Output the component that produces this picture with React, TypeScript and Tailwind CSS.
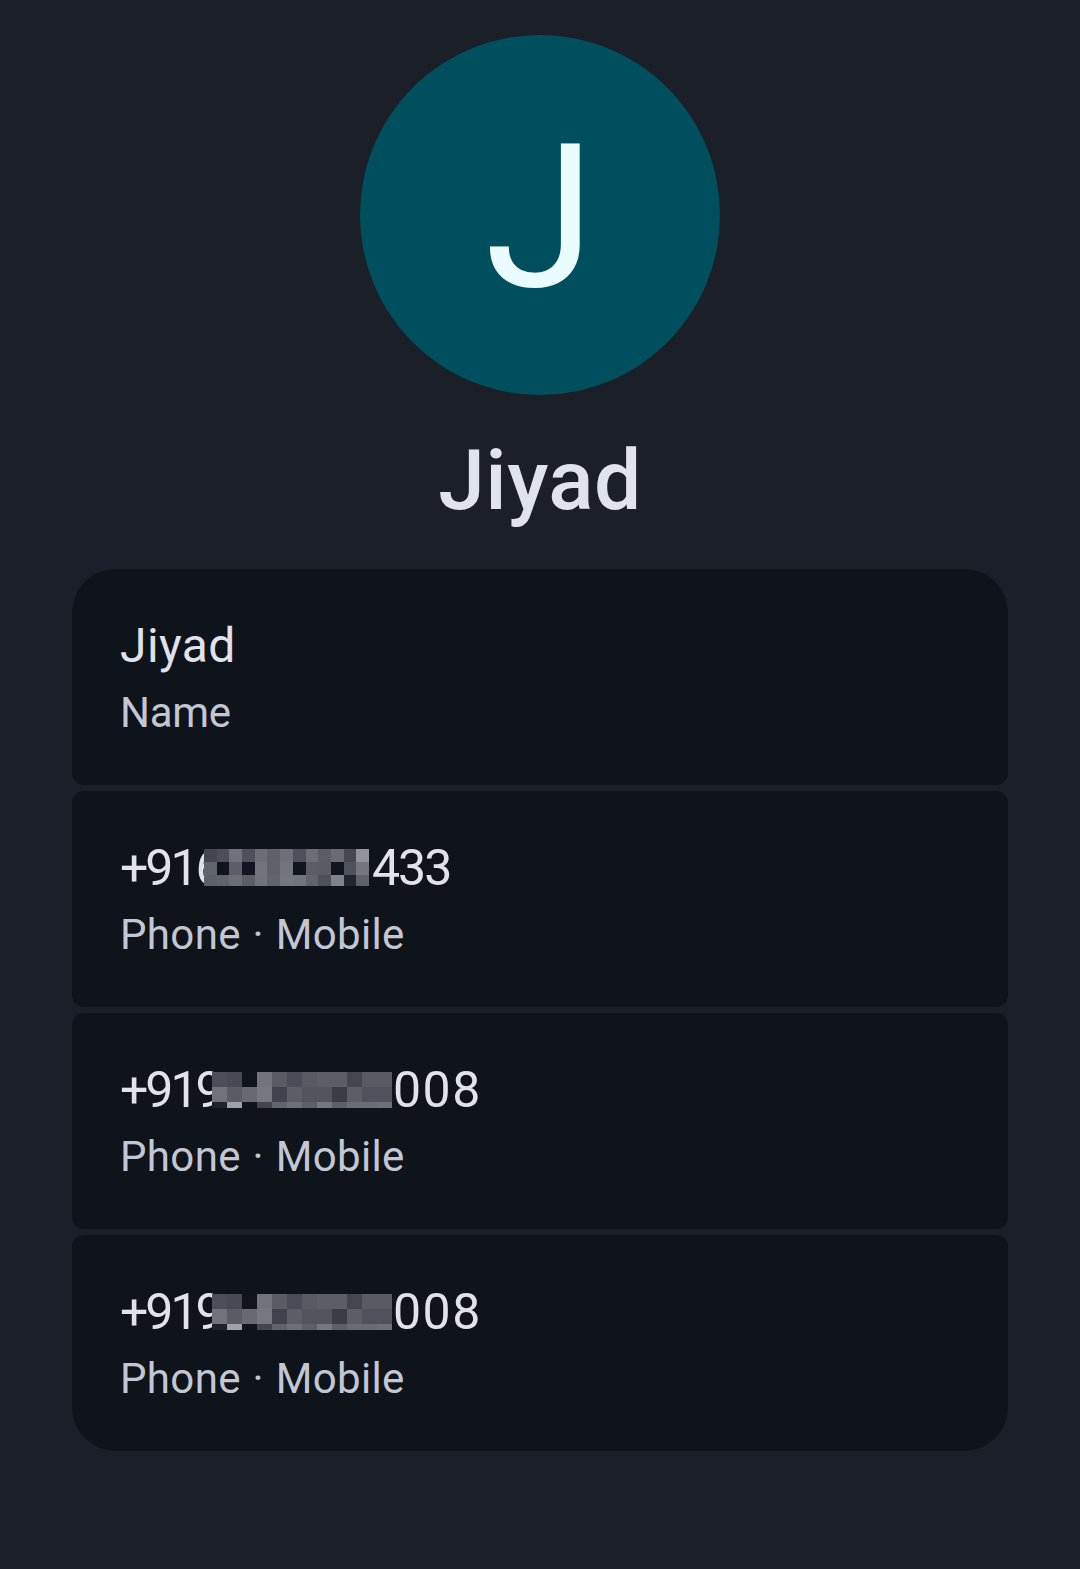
const font = "font-['Roboto','Inter',sans-serif]";

const blurA = {
  rows: [13, 13, 11],
  cols: 13,
  colors: [
    "#43464f","#4c4f58","#70727b","#4f515a","#6c6e76","#5f6169","#6e7079","#4e5059","#6c6e77","#5b5d65","#6a6c74","#464851","#92949c",
    "#62646c","#10141c","#5c5e67","#11151d","#72747c","#60626a","#73757d","#11151d","#5c5e66","#5a5c64","#10141c","#50525b","#74767e",
    "#5f6169","#62646c","#6c6e76","#5c5e66","#71737b","#62646c","#75777f","#73757d","#62646c","#4f5159","#81838b","#22252d","#5f6169",
  ],
};

const blurB = {
  rows: [15, 15, 6],
  cols: 12,
  colors: [
    "#4c4f57","#474a52","#10141b","#72747c","#5a5c64","#4b4d56","#585a62","#5c5e66","#5c5e66","#43464e","#595b63","#595b63",
    "#71737b","#5a5c64","#686a72","#767880","#40434c","#5c5e66","#53555d","#53555d","#3a3d46","#5c5e66","#50525b","#50525b",
    "#1e2229","#a0a2aa","#10141b","#43464e","#62646c","#6e7078","#5e6068","#767880","#5e6068","#6a6c74","#6a6c74","#6e7078",
  ],
};

function Blur({ data, className }: { data: { rows: number[]; cols: number; colors: string[] }; className: string }) {
  return (
    <div className={`absolute grid ${className}`} style={{ gridTemplateColumns: `repeat(${data.cols}, 1fr)`, gridTemplateRows: data.rows.map((r) => `${r}px`).join(" ") }}>
      {data.colors.map((c, i) => (
        <div key={i} style={{ backgroundColor: c }} />
      ))}
    </div>
  );
}

function Row({ title, sub, subClass, radius, blur }: { title: React.ReactNode; sub: string; subClass: string; radius: string; blur?: React.ReactNode }) {
  return (
    <div className={`relative h-[216px] bg-[#0f131a] pl-[48px] pt-[45px] ${radius}`}>
      <div className="text-[48px] leading-[64px] text-[#e0e2ec]">{title}</div>
      <div className={`text-[42px] leading-[56px] mt-[7px] text-[#c3c6d3] ${subClass}`}>{sub}</div>
      {blur}
    </div>
  );
}

function Phone({ head, tail, width, spacing }: { head: string; tail: string; width: string; spacing: string }) {
  return (
    <div className="whitespace-nowrap text-[50px]">
      <span className={`inline-block tracking-[-3px] ${width}`}>{head}</span>
      <span className={spacing}>{tail}</span>
    </div>
  );
}

const phoneSub = "tracking-[0.35px] [word-spacing:1px]";

export default function App() {
  return (
    <div className={`w-[1080px] h-[1569px] bg-[#1b1f27] flex flex-col items-center pt-[35px] ${font}`}>
      <div className="w-[360px] h-[360px] rounded-full bg-[#004f5f] flex items-center justify-center pt-[6px] text-[#ebfcff] text-[200px] leading-none">J</div>
      <div className="mt-[36px] h-[100px] text-[84px] leading-[100px] font-medium tracking-[0.5px] text-[#e0e2ec]">Jiyad</div>
      <div className="mt-[38px] w-[936px] flex flex-col gap-[6px]">
        <Row title={<span className="tracking-[0.4px]">Jiyad</span>} sub="Name" subClass="tracking-[-0.3px]" radius="rounded-t-[44px] rounded-b-[12px]" />
        <Row title={<Phone head="+916" tail="433" width="w-[252px]" spacing="tracking-[-2px]" />} sub="Phone · Mobile" subClass={phoneSub} radius="rounded-[12px]" blur={<Blur data={blurA} className="left-[132px] top-[58px] w-[165px]" />} />
        <Row title={<Phone head="+919" tail="008" width="w-[273px]" spacing="tracking-[1.5px]" />} sub="Phone · Mobile" subClass={phoneSub} radius="rounded-[12px]" blur={<Blur data={blurB} className="left-[140px] top-[59px] w-[180px]" />} />
        <Row title={<Phone head="+919" tail="008" width="w-[273px]" spacing="tracking-[1.5px]" />} sub="Phone · Mobile" subClass={phoneSub} radius="rounded-t-[12px] rounded-b-[44px]" blur={<Blur data={blurB} className="left-[140px] top-[59px] w-[180px]" />} />
      </div>
    </div>
  );
}
